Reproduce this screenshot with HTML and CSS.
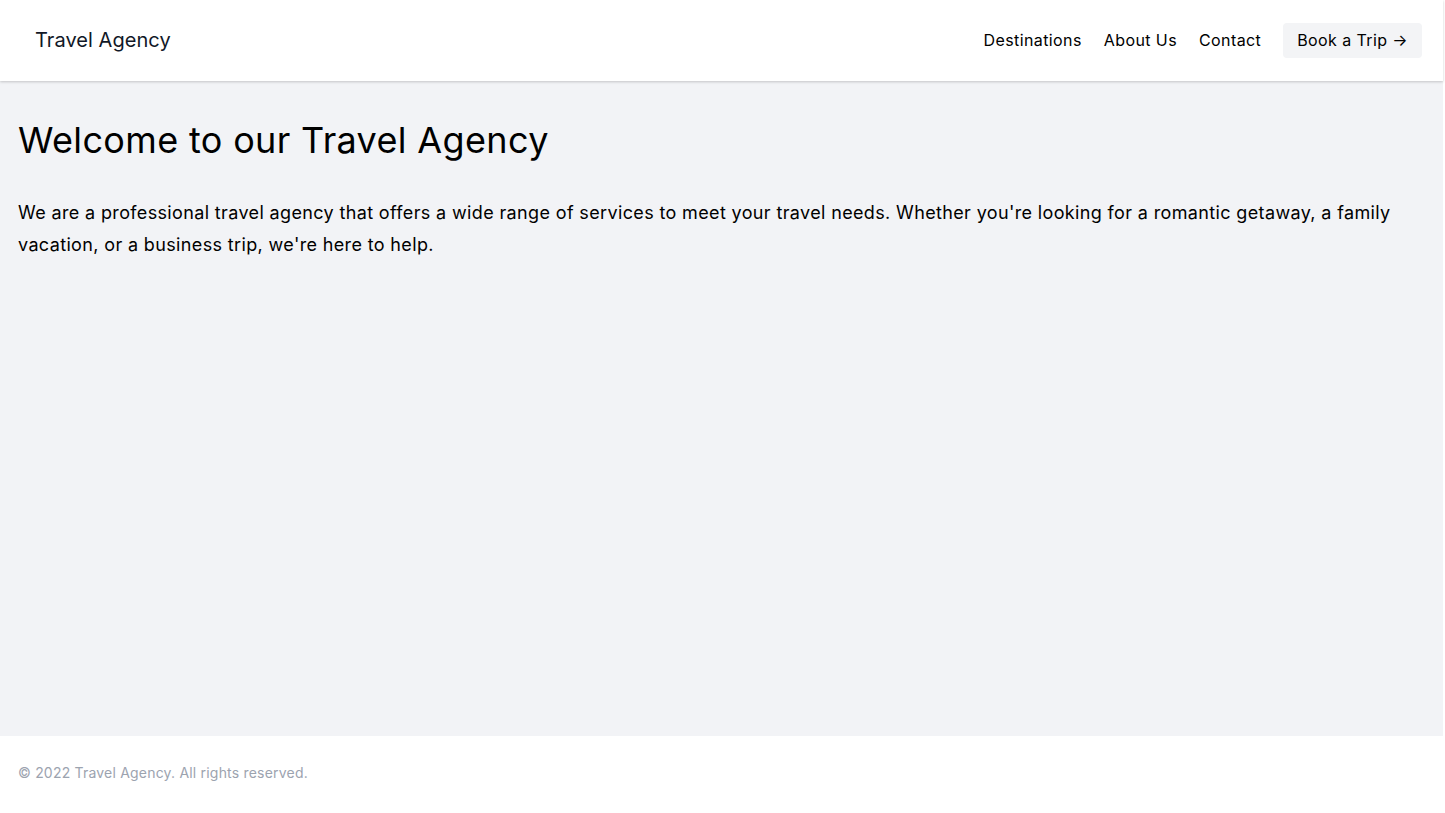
FILE: index.html
```html
<!DOCTYPE html>
<html lang="en">
<head>
<meta charset="utf-8">
<title>Travel Agency</title>
<link rel="stylesheet" href="styles.css">
</head>
<body>
<div class="page">
  <header class="header">
    <a class="logo" href="#">Travel Agency</a>
    <nav class="nav">
      <a href="#" class="nav-link">Destinations</a>
      <a href="#" class="nav-link">About Us</a>
      <a href="#" class="nav-link">Contact</a>
      <a href="#" class="btn">Book a Trip →</a>
    </nav>
  </header>
  <main class="main">
    <h1 class="title">Welcome to our Travel Agency</h1>
    <p class="lead">We are a professional travel agency that offers a wide range of services to meet your travel needs. Whether you're looking for a romantic getaway, a family vacation, or a business trip, we're here to help.</p>
  </main>
  <footer class="footer">
    <p>© 2022 Travel Agency. All rights reserved.</p>
  </footer>
</div>
</body>
</html>
```
FILE: styles.css
```css
* { box-sizing: border-box; }
html, body { margin: 0; padding: 0; }
body {
  font-family: Inter, "Noto Sans", sans-serif;
  color: #000;
  background: #fff;
  letter-spacing: 0.4px;
}
a { color: inherit; text-decoration: none; }
.page {
  height: 813px;
  display: flex;
  flex-direction: column;
  width: 1443px;
}
.header {
  flex: none;
  height: 81px;
  background: #fff;
  display: flex;
  align-items: center;
  justify-content: space-between;
  padding: 0 21px 0 35px;
  box-shadow: 0 1px 3px rgba(0,0,0,0.12), 0 1px 2px rgba(0,0,0,0.08);
  position: relative;
  z-index: 1;
}
.logo { font-size: 20px; color: #111827; letter-spacing: 0.05px; margin-top: -2px; }
.nav { display: flex; align-items: center; gap: 22px; margin-top: -2px; }
.nav-link { font-size: 16px; }
.btn {
  font-size: 16px;
  background: #f3f4f6;
  border-radius: 4px;
  padding: 8px 14px;
  line-height: 19px;
  margin-top: 2px;
}
.main {
  flex: 1;
  background: #f2f3f6;
  padding: 35px 18px;
}
.title {
  font-size: 36px;
  font-weight: 400;
  margin: 0 0 33px;
  line-height: 48px;
  letter-spacing: 0.35px;
}
.lead {
  font-size: 18px;
  line-height: 32px;
  margin: 0;
  letter-spacing: 0.36px;
}
.footer {
  flex: none;
  height: 77px;
  padding: 0 18px 4px;
  display: flex;
  align-items: center;
}
.footer p { margin: 0; font-size: 14px; color: #9ca3af; letter-spacing: 0.2px; }
```
